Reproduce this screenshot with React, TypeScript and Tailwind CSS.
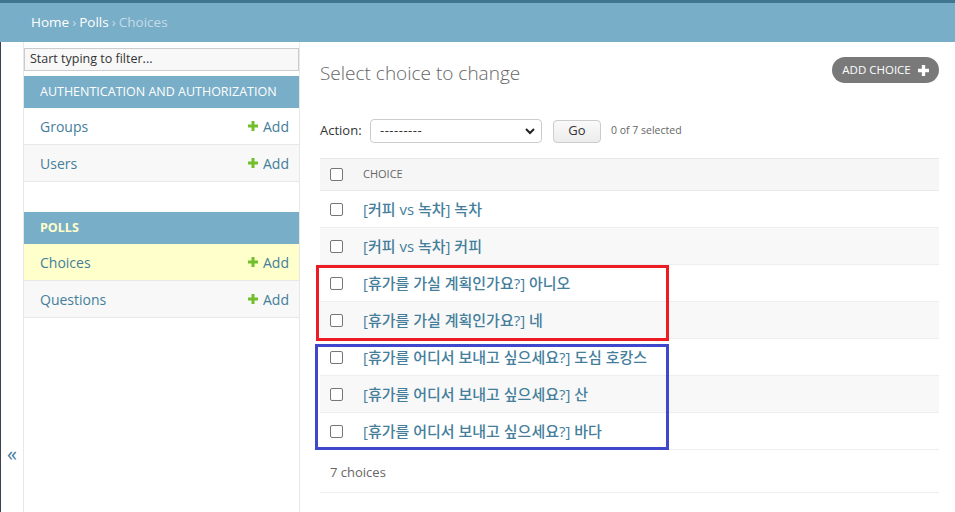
import { ReactNode } from 'react';

const FONT = "font-['Open_Sans','Noto_Sans_CJK_KR',sans-serif]";

function GreenPlus() {
    return (
        <svg width="10" height="10" viewBox="0 0 10 10" className="shrink-0">
            <path d="M3.5 0h3v3.5H10v3H6.5V10h-3V6.5H0v-3h3.5z" fill="#70bf2b" />
        </svg>
    );
}

function Checkbox() {
    return <div className="w-[13px] h-[13px] shrink-0 border border-[#767676] rounded-[2px] bg-white" />;
}

function ModelRow({ name, alt, current }: { name: string; alt?: boolean; current?: boolean }) {
    const bg = current ? 'bg-[#ffffcc]' : alt ? 'bg-[#f8f8f8]' : 'bg-white';
    return (
        <div className={`${bg} h-[37px] border-b border-[#e8e8e8] flex items-center justify-between pl-[16px] pr-[10px]`}>
            <span className="text-[14px] text-[#447e9b]">{name}</span>
            <span className="flex items-center gap-[5px] text-[14px] text-[#447e9b]">
                <GreenPlus />
                Add
            </span>
        </div>
    );
}

function Caption({ children, current }: { children: ReactNode; current?: boolean }) {
    return (
        <div
            className={`h-[32px] bg-[#79aec8] flex items-center pl-[16px] text-[12.5px] ${
                current ? 'text-[#ffffcc] font-bold' : 'text-white'
            }`}
        >
            {children}
        </div>
    );
}

const choices = [
    '[커피 vs 녹차] 녹차',
    '[커피 vs 녹차] 커피',
    '[휴가를 가실 계획인가요?] 아니오',
    '[휴가를 가실 계획인가요?] 네',
    '[휴가를 어디서 보내고 싶으세요?] 도심 호캉스',
    '[휴가를 어디서 보내고 싶으세요?] 산',
    '[휴가를 어디서 보내고 싶으세요?] 바다',
];

export default function App() {
    return (
        <div className={`relative w-[955px] h-[512px] overflow-hidden bg-white ${FONT}`}>
            <div className="h-[3px] bg-[#417690]" />
            <div className="h-[39px] bg-[#79aec8] flex items-center pl-[31px] text-[13.5px] text-white">
                Home <span className="mx-[3px] text-[#c4dce8]">›</span> Polls{' '}
                <span className="mx-[3px] text-[#c4dce8]">›</span>
                <span className="text-[#c4dce8]">Choices</span>
            </div>

            <div className="flex h-[470px] border-l border-[#3b4252]">
                {/* sidebar toggle */}
                <div className="w-[22px] pt-[400px] flex justify-center">
                    <span className="text-[20px] leading-[24px] text-[#447e9b]">«</span>
                </div>

                {/* sidebar */}
                <nav className="w-[277px] border-x border-[#e8e8e8]">
                    <div className="pt-[6px]">
                        <div className="h-[23px] border border-[#cccccc] bg-[#f8f8f8] flex items-center pl-[5px] text-[12.5px] text-[#333]">
                            Start typing to filter...
                        </div>
                    </div>
                    <div className="mt-[5px]">
                        <Caption>AUTHENTICATION AND AUTHORIZATION</Caption>
                        <ModelRow name="Groups" />
                        <ModelRow name="Users" alt />
                    </div>
                    <div className="mt-[30px]">
                        <Caption current>POLLS</Caption>
                        <ModelRow name="Choices" current />
                        <ModelRow name="Questions" alt />
                    </div>
                </nav>

                {/* content */}
                <main className="flex-1 pl-[20px] pr-[16px]">
                    <div className="mt-[15px] h-[26px] flex items-center justify-between">
                        <h1 className="mt-[6px] text-[19px] font-light text-[#666]">Select choice to change</h1>
                        <div className="h-[26px] w-[107px] rounded-full bg-[#797979] flex items-center justify-center gap-[7px] text-[11.5px] text-white">
                            ADD CHOICE
                            <svg width="11" height="11" viewBox="0 0 10 10">
                                <path d="M3.5 0h3v3.5H10v3H6.5V10h-3V6.5H0v-3h3.5z" fill="#fff" />
                            </svg>
                        </div>
                    </div>

                    <div className="mt-[36px] h-[24px] flex items-center text-[13px]">
                        <span className="text-[#333] w-[50px]">Action:</span>
                        <div className="w-[172px] h-[24px] border border-[#cccccc] rounded-[4px] flex items-center justify-between pl-[9px] pr-[6px] text-[#333]">
                            <span className="tracking-[0.5px]">---------</span>
                            <svg width="10" height="8" viewBox="0 0 10 8">
                                <path d="M1 2l4 4 4-4" fill="none" stroke="#222" strokeWidth="2" />
                            </svg>
                        </div>
                        <div className="ml-[11px] w-[48px] h-[23px] border border-[#cccccc] rounded-[4px] bg-gradient-to-b from-[#fafafa] to-[#ececec] flex items-center justify-center text-[#333]">
                            Go
                        </div>
                        <span className="ml-[10px] text-[10.5px] text-[#666]">0 of 7 selected</span>
                    </div>

                    <div className="mt-[15px]">
                        <div className="h-[33px] bg-[#f6f6f6] border-y border-[#e8e8e8] flex items-center pl-[10px]">
                            <Checkbox />
                            <span className="ml-[20px] text-[11px] text-[#666]">CHOICE</span>
                        </div>
                        {choices.map((c, i) => (
                            <div
                                key={i}
                                className={`h-[37px] border-b border-[#eeeeee] flex items-center pl-[10px] ${
                                    i % 2 === 1 ? 'bg-[#f8f8f8]' : 'bg-white'
                                }`}
                            >
                                <Checkbox />
                                <span className="ml-[20px] text-[15px] font-medium text-[#447e9b]">{c}</span>
                            </div>
                        ))}
                        <div className="h-[43px] border-b border-[#eeeeee] flex items-center pl-[10px] pt-[3px] text-[13px] text-[#666]">
                            7 choices
                        </div>
                    </div>
                </main>
            </div>

            {/* annotation boxes */}
            <div className="absolute left-[316px] top-[265px] w-[353px] h-[76px] border-[3px] border-[#ed1c24]" />
            <div className="absolute left-[315px] top-[344px] w-[354px] h-[106px] border-[3px] border-[#3f48cc]" />
        </div>
    );
}
